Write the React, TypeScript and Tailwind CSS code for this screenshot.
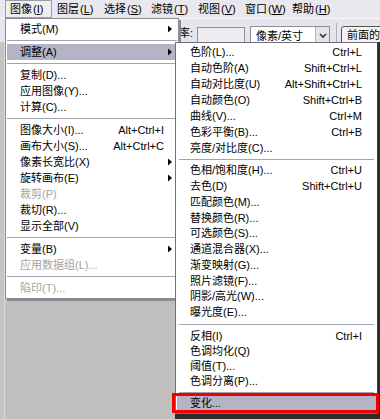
import React from "react";

type Item = {
  t?: string;
  k?: string;
  arrow?: boolean;
  dis?: boolean;
  sep?: boolean;
  hl?: boolean;
  h?: string;
  sh?: string;
};

const Arrow = () => (
  <svg
    width="4"
    height="7"
    viewBox="0 0 4 7"
    className="absolute right-[5px] top-1/2 -translate-y-1/2"
  >
    <path d="M0 0L4 3.5L0 7Z" fill="#000" />
  </svg>
);

const leftItems: Item[] = [
  { t: "模式(M)", arrow: true },
  { sep: true },
  { t: "调整(A)", arrow: true, hl: true },
  { sep: true },
  { t: "复制(D)..." },
  { t: "应用图像(Y)..." },
  { t: "计算(C)..." },
  { sep: true },
  { t: "图像大小(I)...", k: "Alt+Ctrl+I" },
  { t: "画布大小(S)...", k: "Alt+Ctrl+C" },
  { t: "像素长宽比(X)", arrow: true },
  { t: "旋转画布(E)", arrow: true },
  { t: "裁剪(P)", dis: true },
  { t: "裁切(R)..." },
  { t: "显示全部(V)" },
  { sep: true },
  { t: "变量(B)", arrow: true },
  { t: "应用数据组(L)...", dis: true },
  { sep: true },
  { t: "陷印(T)...", dis: true },
];

const subItems: Item[] = [
  { t: "色阶(L)...", k: "Ctrl+L", h: "h-[16px]" },
  { t: "自动色阶(A)", k: "Shift+Ctrl+L", h: "h-[16px]" },
  { t: "自动对比度(U)", k: "Alt+Shift+Ctrl+L", h: "h-[16px]" },
  { t: "自动颜色(O)", k: "Shift+Ctrl+B", h: "h-[16px]" },
  { t: "曲线(V)...", k: "Ctrl+M", h: "h-[16px]" },
  { t: "色彩平衡(B)...", k: "Ctrl+B", h: "h-[16px]" },
  { t: "亮度/对比度(C)...", h: "h-[16px]" },
  { sep: true, sh: "h-[7px]" },
  { t: "色相/饱和度(H)...", k: "Ctrl+U", h: "h-[15.75px]" },
  { t: "去色(D)", k: "Shift+Ctrl+U", h: "h-[15.75px]" },
  { t: "匹配颜色(M)...", h: "h-[15.75px]" },
  { t: "替换颜色(R)...", h: "h-[15.75px]" },
  { t: "可选颜色(S)...", h: "h-[15.75px]" },
  { t: "通道混合器(X)...", h: "h-[15.75px]" },
  { t: "渐变映射(G)...", h: "h-[15.75px]" },
  { t: "照片滤镜(F)...", h: "h-[15.75px]" },
  { t: "阴影/高光(W)...", h: "h-[15.75px]" },
  { t: "曝光度(E)...", h: "h-[15.75px]" },
  { sep: true, sh: "h-[8px]" },
  { t: "反相(I)", k: "Ctrl+I", h: "h-[15px]" },
  { t: "色调均化(Q)", h: "h-[15px]" },
  { t: "阈值(T)...", h: "h-[15px]" },
  { t: "色调分离(P)...", h: "h-[15px]" },
  { sep: true, sh: "h-[7px]" },
  { t: "变化...", hl: true, h: "h-[15px]" },
];

const bar: [string, string][] = [
  ["图像", "I"],
  ["图层", "L"],
  ["选择", "S"],
  ["滤镜", "T"],
  ["视图", "V"],
  ["窗口", "W"],
  ["帮助", "H"],
];

export default function App() {
  return (
    <div
      className="relative w-[380px] h-[419px] overflow-hidden bg-[#c0c0c0] text-[11px] text-black flex flex-col"
      style={{ fontFamily: '"Liberation Sans", "Noto Sans CJK SC", sans-serif' }}
    >
      {/* menu bar */}
      <div className="h-[18px] bg-[#e9e8ef] flex pl-[5px] shrink-0">
        {bar.map(([n, l], i) => (
          <div
            key={n}
            className={`w-[47px] h-[18px] shrink-0 flex items-center pl-[4px] leading-none whitespace-nowrap ${
              i === 0 ? "border border-[#9c9ba8] bg-[#eeeef3]" : "border border-transparent"
            }`}
          >
            {n}
            <span className="ml-[1px]">
              (<span className="underline">{l}</span>)
            </span>
          </div>
        ))}
      </div>

      {/* options toolbar */}
      <div className="h-[24px] bg-[#e6e5ec] border-t border-[#f8f8fb] flex items-start shrink-0 overflow-hidden">
        <div className="w-[193px] shrink-0 text-right pt-[9px] leading-none whitespace-nowrap">分辨率:</div>
        <div className="ml-[4px] mt-[8px] w-[48px] h-[19px] shrink-0 border border-[#8e8e99] bg-[#ebebf0]" />
        <div className="ml-[5px] mt-[7px] w-[80px] h-[20px] shrink-0 border border-[#8e8e99] bg-white flex">
          <div className="flex-1 pl-[5px] pt-[4px] leading-none whitespace-nowrap">像素/英寸</div>
          <div className="w-[14px] h-full border-l border-[#b8b8c4] bg-[#e4e4ec] flex items-center justify-center">
            <svg width="8" height="6" viewBox="0 0 8 6">
              <path d="M1 1L4 4L7 1" stroke="#333" strokeWidth="1.6" fill="none" />
            </svg>
          </div>
        </div>
        <div className="ml-[6px] mt-[4px] w-px h-[22px] shrink-0 bg-[#b0afbb]" />
        <div className="ml-[4px] mt-[7px] h-[20px] shrink-0 border border-[#555] rounded-[3px] bg-[#f3f3f6] pl-[5px] pr-[5px] pt-[3px] leading-none whitespace-nowrap">
          前面的图像
        </div>
      </div>

      {/* work area */}
      <div className="flex-1 flex">
        <div className="w-[5px] bg-[#c4c4c4] border-r border-[#dcdcdc]" />
        <div className="w-[170px] bg-[#c0c0c0]" />
        <div className="flex-1 bg-[#2b2b2b]" />
      </div>

      {/* main dropdown */}
      <div className="absolute left-[5px] top-[18px] w-[174px] border border-[#8a8a94] bg-white px-[1px] pt-[2px] pb-[2px] shadow-[2px_2px_0_#8c8c8c]">
        {leftItems.map((it, i) =>
          it.sep ? (
            <div key={i} className="h-[7px] flex items-center">
              <div className="w-full h-px bg-[#a4a4ae]" />
            </div>
          ) : (
            <div
              key={i}
              className={`relative h-[16px] flex items-center justify-between pl-[13px] pr-[13px] leading-none whitespace-nowrap ${
                it.hl ? "bg-[#b4b4c6]" : ""
              } ${it.dis ? "text-[#a3a3a3]" : ""}`}
            >
              <span>{it.t}</span>
              {it.k && <span>{it.k}</span>}
              {it.arrow && <Arrow />}
            </div>
          )
        )}
      </div>

      {/* submenu */}
      <div className="absolute left-[175px] top-[42px] w-[203px] border border-[#707078] border-r-[#404044] bg-white px-[1px] pt-[1px] pb-[2px]">
        {subItems.map((it, i) =>
          it.sep ? (
            <div key={i} className={`${it.sh} flex items-center px-[2px]`}>
              <div className="w-full h-px bg-[#a4a4ae]" />
            </div>
          ) : (
            <div
              key={i}
              className={`relative ${it.h} flex items-center justify-between pl-[13px] pr-[14px] leading-none whitespace-nowrap ${
                it.hl ? "bg-[#b4b4c6]" : ""
              }`}
            >
              <span>{it.t}</span>
              {it.k && <span>{it.k}</span>}
            </div>
          )
        )}
      </div>

      {/* red annotation box */}
      <div className="absolute left-[172px] top-[393px] w-[207px] h-[20px] border-[3px] border-[#f00000]" />
    </div>
  );
}
